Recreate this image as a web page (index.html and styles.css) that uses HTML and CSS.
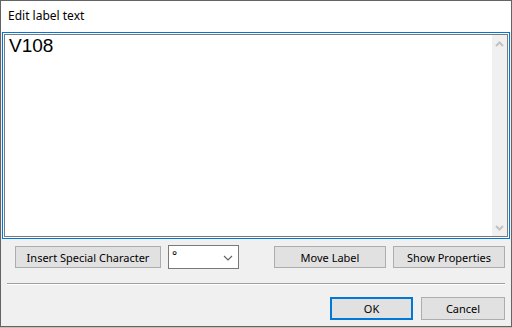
FILE: index.html
```html
<!DOCTYPE html>
<html>
<head>
<meta charset="utf-8">
<link rel="stylesheet" href="styles.css">
</head>
<body>
<div class="window">
  <div class="titlebar">Edit label text</div>
  <div class="editor">
    <div class="editor-inner">
      <div class="editor-text">V108</div>
      <div class="scrollbar">
        <div class="sb-btn">
          <svg width="9" height="6" viewBox="0 0 9 6"><polyline points="1,5 4.5,1.5 8,5" fill="none" stroke="#c2c2c2" stroke-width="2"/></svg>
        </div>
        <div class="sb-btn">
          <svg width="9" height="6" viewBox="0 0 9 6"><polyline points="1,1 4.5,4.5 8,1" fill="none" stroke="#c2c2c2" stroke-width="2"/></svg>
        </div>
      </div>
    </div>
  </div>
  <div class="row tools">
    <div class="btn btn-insert">Insert Special Character</div>
    <div class="combo">
      <span class="combo-value">°</span>
      <svg class="combo-arrow" width="10" height="6" viewBox="0 0 10 6"><polyline points="1,1 5,5 9,1" fill="none" stroke="#606060" stroke-width="1.1"/></svg>
    </div>
    <div class="btn btn-move">Move Label</div>
    <div class="btn btn-props">Show Properties</div>
  </div>
  <div class="separator"></div>
  <div class="row actions">
    <div class="btn btn-ok">OK</div>
    <div class="btn btn-cancel">Cancel</div>
  </div>
</div>
</body>
</html>
```
FILE: styles.css
```css
body {
  margin: 0;
  background: #c9bcae;
}
.window {
  width: 512px;
  height: 327px;
  box-sizing: border-box;
  border: 1px solid #646464;
  background: #f0f0f0;
  display: flex;
  flex-direction: column;
  font-family: "Noto Sans", sans-serif;
  font-size: 11px;
  color: #000;
}
.titlebar {
  height: 31px;
  box-sizing: border-box;
  background: #fff;
  padding: 7px 0 0 7px;
  font-size: 12px;
  line-height: 16px;
}
.editor {
  margin: 0 1px;
  height: 207px;
  box-sizing: border-box;
  border: 1px solid #0078d7;
  padding: 1px;
  background: #fff;
  display: flex;
}
.editor-inner {
  flex: 1;
  border: 1px solid #7a7a7a;
  display: flex;
}
.editor-text {
  flex: 1;
  padding: 0 4px;
  font-family: "Liberation Sans", Arial, sans-serif;
  font-size: 19px;
  line-height: 22px;
}
.scrollbar {
  width: 15px;
  background: #f0f0f0;
  display: flex;
  flex-direction: column;
  justify-content: space-between;
}
.sb-btn {
  height: 17px;
  display: flex;
  align-items: center;
  justify-content: center;
}
.row {
  display: flex;
  align-items: center;
}
.tools {
  margin-top: 6px;
  height: 24px;
  padding: 0 6px 0 14px;
  gap: 7px;
}
.btn {
  box-sizing: border-box;
  height: 22px;
  background: #e1e1e1;
  border: 1px solid #adadad;
  display: flex;
  align-items: center;
  justify-content: center;
  white-space: nowrap;
}
.btn-insert { width: 146px; }
.btn-move { width: 112px; margin-left: auto; }
.btn-props { width: 112px; }
.combo {
  box-sizing: border-box;
  width: 71px;
  height: 24px;
  background: #fff;
  border: 1px solid #7a7a7a;
  display: flex;
  align-items: center;
  justify-content: space-between;
  padding: 0 5px 0 3px;
}
.combo-value {
  font-size: 12px;
  line-height: 16px;
  margin-top: -2px;
}
.combo-arrow {
  margin-top: 2px;
}
.separator {
  margin: 14px 6px 0 6px;
  border-top: 1px solid #a0a0a0;
  border-bottom: 1px solid #fff;
}
.actions {
  margin-top: 12px;
  height: 23px;
  justify-content: flex-end;
  padding-right: 6px;
  gap: 8px;
}
.actions .btn { height: 23px; }
.btn-ok {
  width: 83px;
  border: 2px solid #0078d7;
}
.btn-cancel { width: 84px; }
```
